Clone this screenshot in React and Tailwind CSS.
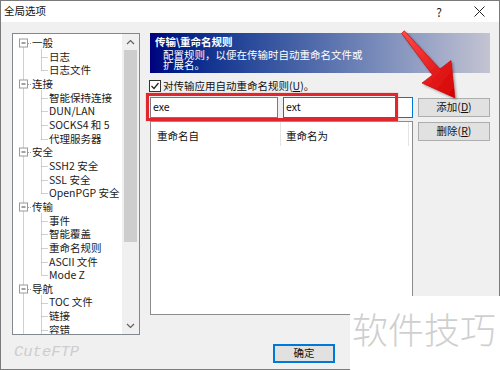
import React from 'react'

const tree = [
  { t: '一般', r: true },
  { t: '日志' },
  { t: '日志文件', last: true },
  { t: '连接', r: true },
  { t: '智能保持连接' },
  { t: 'DUN/LAN' },
  { t: 'SOCKS4 和 5' },
  { t: '代理服务器', last: true },
  { t: '安全', r: true },
  { t: 'SSH2 安全' },
  { t: 'SSL 安全' },
  { t: 'OpenPGP 安全', last: true },
  { t: '传输', r: true },
  { t: '事件' },
  { t: '智能覆盖' },
  { t: '重命名规则' },
  { t: 'ASCII 文件' },
  { t: 'Mode Z', last: true },
  { t: '导航', r: true },
  { t: 'TOC 文件' },
  { t: '链接' },
  { t: '容错' },
]

const ROW = 13.67
const TOP = 2

function TreeLines() {
  const cy = (i) => Math.round(TOP + ROW / 2 + i * ROW) + 0.5
  const items = []
  const dot = { stroke: '#a0a0a0', strokeWidth: 1, strokeDasharray: '1 1' }
  // root vertical line
  items.push(<line key="rv" x1={10.5} y1={cy(0)} x2={10.5} y2={300} {...dot} />)
  let parent = -1
  tree.forEach((n, i) => {
    const y = cy(i)
    if (n.r) {
      parent = i
      items.push(<line key={'rh' + i} x1={15} y1={y} x2={19} y2={y} {...dot} />)
    } else {
      items.push(<line key={'ch' + i} x1={28.5} y1={y} x2={35} y2={y} {...dot} />)
      if (i === parent + 1) {
        // vertical for children group
        let end = i
        while (end < tree.length && !tree[end].r) {
          if (tree[end].last) break
          end++
        }
        const y2 = end >= tree.length ? 300 : cy(end)
        items.push(<line key={'cv' + i} x1={28.5} y1={cy(parent) + 6} x2={28.5} y2={y2} {...dot} />)
      }
    }
  })
  tree.forEach((n, i) => {
    if (!n.r) return
    const y = cy(i)
    items.push(
      <g key={'b' + i}>
        <rect x={6.5} y={y - 4.5} width={8} height={8} fill="#fff" stroke="#9a9a9a" />
        <line x1={8.5} y1={y - 0.5} x2={12.5} y2={y - 0.5} stroke="#444" />
      </g>
    )
  })
  return (
    <svg className="absolute left-0 top-0" width="109" height="300">
      {items}
    </svg>
  )
}

function Tree() {
  return (
    <div className="w-[128px] h-[302px] border border-[#828790] bg-white flex shrink-0">
      <div className="relative flex-1 overflow-hidden pt-[2px]">
        <TreeLines />
        {tree.map((n) => (
          <div
            key={n.t}
            className={`relative h-[13.67px] leading-[13.67px] whitespace-nowrap text-[#1a1a1a] ${n.r ? 'pl-[19px]' : 'pl-[36px]'}`}
          >
            {n.t}
          </div>
        ))}
      </div>
      <div className="w-[17px] bg-[#f0f0f0] flex flex-col items-center">
        <div className="h-[16px] flex items-center justify-center">
          <svg width="9" height="6"><polyline points="1,5 4.5,1.5 8,5" fill="none" stroke="#606060" strokeWidth="1.2" /></svg>
        </div>
        <div className="w-[13px] h-[192px] bg-[#cdcdcd]" />
        <div className="flex-1" />
        <div className="h-[17px] flex items-center justify-center">
          <svg width="9" height="6"><polyline points="1,1 4.5,4.5 8,1" fill="none" stroke="#606060" strokeWidth="1.2" /></svg>
        </div>
      </div>
    </div>
  )
}

function Btn({ children, className = '' }) {
  return (
    <div className={`h-[19px] bg-[#e1e1e1] border border-[#adadad] flex items-center justify-center leading-none text-[#111] ${className}`}>
      {children}
    </div>
  )
}

export default function App() {
  return (
    <div className="relative w-[500px] h-[370px] overflow-hidden font-['Noto_Sans_CJK_SC',sans-serif] text-[10.5px]">
      <div className="w-[500px] h-[370px] border border-[#7a7a7a] bg-[#f0f0f0] flex flex-col">
        {/* title bar */}
        <div className="h-[21px] bg-white flex items-center shrink-0">
          <span className="pl-[3px] text-[#111] leading-none">全局选项</span>
          <span className="ml-auto mr-[32px] text-[12px] text-[#222] leading-none">?</span>
          <svg className="mr-[14px]" width="11" height="11">
            <line x1="0.5" y1="0.5" x2="10.5" y2="10.5" stroke="#222" strokeWidth="1" />
            <line x1="10.5" y1="0.5" x2="0.5" y2="10.5" stroke="#222" strokeWidth="1" />
          </svg>
        </div>

        {/* body */}
        <div className="flex mt-[11px] ml-[11px]">
          <Tree />
          <div className="ml-[10px] w-[340px]">
            <div className="h-[40px] bg-gradient-to-r from-[#00007e] to-[#c4c4d2] text-white pl-[5px] pt-[3px]">
              <div className="font-bold leading-[12px]">{'传输\\重命名规则'}</div>
              <div className="pl-[8px] mt-[2px] leading-[10px]">配置规则，以便在传输时自动重命名文件或</div>
              <div className="pl-[8px] leading-[10px]">扩展名。</div>
            </div>

            <div className="mt-[7px] h-[12px] flex items-center -ml-[1px]">
              <div className="w-[12px] h-[12px] border border-[#333] bg-white flex items-center justify-center">
                <svg width="10" height="10"><polyline points="1.5,5 4,7.5 8.5,2" fill="none" stroke="#222" strokeWidth="1.2" /></svg>
              </div>
              <span className="ml-[2px] leading-none text-[#111]">
                对传输应用自动重命名规则(<span className="underline">U</span>)。
              </span>
            </div>

            <div className="mt-[5px] flex">
              <div className="w-[263px]">
                <div className="flex h-[21px]">
                  <div className="w-[128px] border border-[#7a7a7a] bg-white pl-[2px] flex items-center leading-none text-[#111]">exe</div>
                  <div className="ml-[5px] w-[130px] border border-[#0078d7] bg-white pl-[2px] flex items-center leading-none text-[#111]">ext</div>
                </div>
                <div className="mt-[3px] h-[194px] border border-[#8c8c8c] bg-white">
                  <div className="flex h-[24px] text-[#111]">
                    <div className="w-[130px] border-r border-[#e5e5e5] pl-[6px] pt-[6px] leading-[16px]">重命名自</div>
                    <div className="w-[128px] border-r border-[#e5e5e5] pl-[5px] pt-[6px] leading-[16px]">重命名为</div>
                  </div>
                </div>
              </div>
              <div className="ml-[5px] w-[72px]">
                <Btn className="mt-[1px]">添加(<span className="underline">D</span>)</Btn>
                <Btn className="mt-[5px]">删除(<span className="underline">R</span>)</Btn>
              </div>
            </div>
          </div>
        </div>

        {/* bottom */}
        <div className="flex items-start">
          <span className="w-[272px] shrink-0 pl-[13px] mt-[8px] leading-[18px] italic text-[15.5px] text-[#cdcdcd] font-['Liberation_Mono',monospace]">
            CuteFTP
          </span>
          <div className="mt-[9px] w-[62px] h-[19px] bg-[#e1e1e1] border-2 border-[#0078d7] flex items-center justify-center leading-none text-[#111]">
            确定
          </div>
        </div>
      </div>

      {/* annotation: red rectangle */}
      <div className="absolute left-[146px] top-[93px] w-[252px] h-[28px] border-[3px] border-[#e2262e] shadow-[0_0_1px_#f07070]" />

      {/* annotation: red arrow */}
      <svg className="absolute left-0 top-0" width="500" height="370">
        <defs>
          <linearGradient id="ar" x1="0" y1="0" x2="1" y2="1">
            <stop offset="0" stopColor="#ff4a4a" />
            <stop offset="1" stopColor="#d40000" />
          </linearGradient>
          <filter id="sh" x="-20%" y="-20%" width="140%" height="140%">
            <feDropShadow dx="1.5" dy="1.5" stdDeviation="1.2" floodColor="#000" floodOpacity="0.35" />
          </filter>
        </defs>
        <polygon
          points="404.4,30.8 440,69 451,60.5 455,98 422,83 432.5,75 401.6,33.2"
          fill="url(#ar)"
          stroke="#c00000"
          strokeWidth="0.6"
          filter="url(#sh)"
        />
      </svg>

      {/* watermark overlay */}
      <div className="absolute left-[350px] top-[296px] w-[150px] h-[74px] bg-white pl-[2px] pt-[14px]">
        <div className="text-[36px] leading-none text-[#cfcfcf] font-light whitespace-nowrap">软件技巧</div>
      </div>
    </div>
  )
}
